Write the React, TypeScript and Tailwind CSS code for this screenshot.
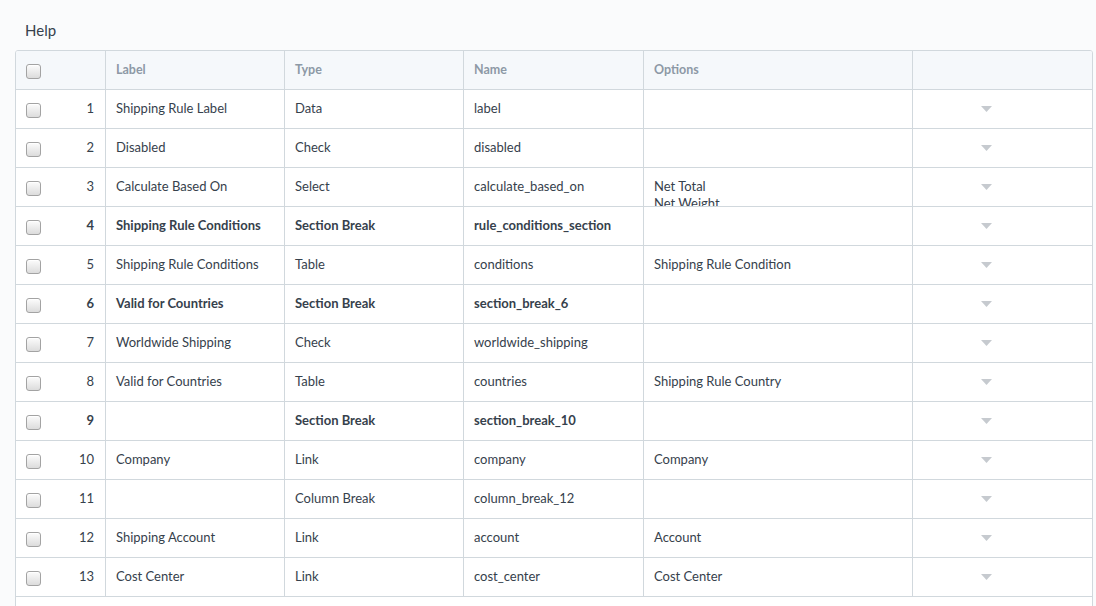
import React from 'react';

type Field = {
  idx: number;
  label: string;
  type: string;
  name: string;
  options?: string[];
  bold?: boolean;
};

const fields: Field[] = [
  { idx: 1, label: 'Shipping Rule Label', type: 'Data', name: 'label' },
  { idx: 2, label: 'Disabled', type: 'Check', name: 'disabled' },
  { idx: 3, label: 'Calculate Based On', type: 'Select', name: 'calculate_based_on', options: ['Net Total', 'Net Weight'] },
  { idx: 4, label: 'Shipping Rule Conditions', type: 'Section Break', name: 'rule_conditions_section', bold: true },
  { idx: 5, label: 'Shipping Rule Conditions', type: 'Table', name: 'conditions', options: ['Shipping Rule Condition'] },
  { idx: 6, label: 'Valid for Countries', type: 'Section Break', name: 'section_break_6', bold: true },
  { idx: 7, label: 'Worldwide Shipping', type: 'Check', name: 'worldwide_shipping' },
  { idx: 8, label: 'Valid for Countries', type: 'Table', name: 'countries', options: ['Shipping Rule Country'] },
  { idx: 9, label: '', type: 'Section Break', name: 'section_break_10', bold: true },
  { idx: 10, label: 'Company', type: 'Link', name: 'company', options: ['Company'] },
  { idx: 11, label: '', type: 'Column Break', name: 'column_break_12' },
  { idx: 12, label: 'Shipping Account', type: 'Link', name: 'account', options: ['Account'] },
  { idx: 13, label: 'Cost Center', type: 'Link', name: 'cost_center', options: ['Cost Center'] },
];

const cols = 'grid grid-cols-[90px_179px_179px_180px_269px_1fr]';

const Checkbox = () => (
  <span className="block w-[15px] h-[15px] mt-[2px] rounded-[3px] border border-[#a3a3a3] bg-gradient-to-b from-[#fcfcfc] to-[#dcdcdc] shadow-[inset_0_1px_0_#fff]" />
);

const Caret = () => (
  <svg width="11" height="6" viewBox="0 0 11 6" className="block">
    <path d="M0 0 L11 0 L5.5 6 Z" fill="#c6cacf" />
  </svg>
);

const Row = ({ f }: { f: Field }) => (
  <div className={`${cols} h-[39px] border-b border-[#d1d8dd] text-[13px] text-[#36414c] ${f.bold ? 'font-bold' : ''}`}>
    <div className="flex items-center justify-between pl-[10px] pr-[11px] border-r border-[#d1d8dd]">
      <Checkbox />
      <span>{f.idx}</span>
    </div>
    <div className="flex items-center px-[10px] border-r border-[#d1d8dd] truncate">{f.label}</div>
    <div className="flex items-center px-[10px] border-r border-[#d1d8dd]">{f.type}</div>
    <div className="flex items-center px-[10px] border-r border-[#d1d8dd]">{f.name}</div>
    <div className="px-[10px] pt-[10px] border-r border-[#d1d8dd] overflow-hidden leading-[17px]">
      {f.options?.map((o) => (
        <div key={o}>{o}</div>
      ))}
    </div>
    <div className="flex items-center pl-[68px]">
      <Caret />
    </div>
  </div>
);

export default function App() {
  return (
    <div className="min-h-screen bg-[#fafbfc] pl-[15px] pr-[3px] pt-[20px]" style={{ fontFamily: 'Lato, "Noto Sans", sans-serif' }}>
      <div className="pl-[10px] text-[15px] leading-[20px] text-[#36414c] mb-[10px]">Help</div>
      <div className="bg-white border border-[#d1d8dd] rounded-t-[3px] overflow-hidden">
        <div className={`${cols} h-[39px] border-b border-[#d1d8dd] bg-[#f5f8fb] text-[12.5px] font-bold text-[#8d99a6]`}>
          <div className="flex items-center pl-[10px] border-r border-[#d1d8dd]">
            <Checkbox />
          </div>
          <div className="flex items-center px-[10px] border-r border-[#d1d8dd]">Label</div>
          <div className="flex items-center px-[10px] border-r border-[#d1d8dd]">Type</div>
          <div className="flex items-center px-[10px] border-r border-[#d1d8dd]">Name</div>
          <div className="flex items-center px-[10px] border-r border-[#d1d8dd]">Options</div>
          <div />
        </div>
        {fields.map((f) => (
          <Row key={f.idx} f={f} />
        ))}
        <div className="h-[40px]" />
      </div>
    </div>
  );
}
